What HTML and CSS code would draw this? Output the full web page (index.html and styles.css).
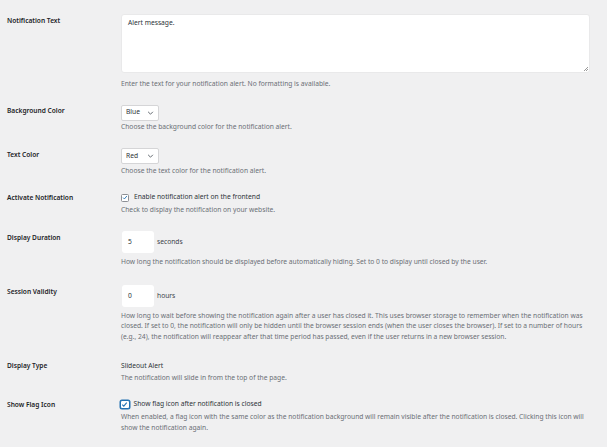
FILE: index.html
```html
<!DOCTYPE html>
<html lang="en">
<head>
<meta charset="utf-8">
<title>Notification Settings</title>
<link rel="stylesheet" href="styles.css">
</head>
<body>
<div class="form">
  <div class="row row-textarea">
    <div class="th">Notification Text</div>
    <div class="td">
      <div class="textarea">Alert message.<span class="grip"></span></div>
      <p class="desc">Enter the text for your notification alert. No formatting is available.</p>
    </div>
  </div>

  <div class="row row-select">
    <div class="th">Background Color</div>
    <div class="td">
      <div class="select">Blue<svg class="chev" viewBox="0 0 8 5" width="7" height="4"><path d="M1 1l3 3 3-3" fill="none" stroke="#50575e" stroke-width="1.1"/></svg></div>
      <p class="desc">Choose the background color for the notification alert.</p>
    </div>
  </div>

  <div class="row row-select">
    <div class="th">Text Color</div>
    <div class="td">
      <div class="select">Red<svg class="chev" viewBox="0 0 8 5" width="7" height="4"><path d="M1 1l3 3 3-3" fill="none" stroke="#50575e" stroke-width="1.1"/></svg></div>
      <p class="desc">Choose the text color for the notification alert.</p>
    </div>
  </div>

  <div class="row row-check">
    <div class="th">Activate Notification</div>
    <div class="td">
      <div class="check-line">
        <span class="checkbox"><svg viewBox="0 0 10 10" width="7" height="7"><path d="M1.8 5.2l2.2 2.2 4.2-5" fill="none" stroke="#2271b1" stroke-width="1.5"/></svg></span>
        <span class="ctl-text">Enable notification alert on the frontend</span>
      </div>
      <p class="desc">Check to display the notification on your website.</p>
    </div>
  </div>

  <div class="row row-number">
    <div class="th">Display Duration</div>
    <div class="td">
      <div class="num-line">
        <span class="number">5</span>
        <span class="unit">seconds</span>
      </div>
      <p class="desc">How long the notification should be displayed before automatically hiding. Set to 0 to display until closed by the user.</p>
    </div>
  </div>

  <div class="row row-number">
    <div class="th">Session Validity</div>
    <div class="td">
      <div class="num-line">
        <span class="number">0</span>
        <span class="unit">hours</span>
      </div>
      <p class="desc">How long to wait before showing the notification again after a user has closed it. This uses browser storage to remember when the notification was closed. If set to 0, the notification will only be hidden until the browser session ends (when the user closes the browser). If set to a number of hours (e.g., 24), the notification will reappear after that time period has passed, even if the user returns in a new browser session.</p>
    </div>
  </div>

  <div class="row row-text">
    <div class="th">Display Type</div>
    <div class="td">
      <div class="ctl-text">Slideout Alert</div>
      <p class="desc">The notification will slide in from the top of the page.</p>
    </div>
  </div>

  <div class="row row-check">
    <div class="th">Show Flag Icon</div>
    <div class="td">
      <div class="check-line">
        <span class="checkbox focused"><svg viewBox="0 0 10 10" width="7" height="7"><path d="M1.8 5.2l2.2 2.2 4.2-5" fill="none" stroke="#2271b1" stroke-width="1.5"/></svg></span>
        <span class="ctl-text">Show flag icon after notification is closed</span>
      </div>
      <p class="desc">When enabled, a flag icon with the same color as the notification background will remain visible after the notification is closed. Clicking this icon will show the notification again.</p>
    </div>
  </div>
</div>
</body>
</html>
```

FILE: styles.css
```css
html, body {
  margin: 0;
  padding: 0;
  background: #f0f0f1;
}
body {
  font-family: "Noto Sans", "Open Sans", sans-serif;
  font-size: 6.7px;
  line-height: 10.65px;
  color: #3c434a;
}
.form {
  display: flex;
  flex-direction: column;
  gap: 15.4px;
  padding: 14px 0 0 7px;
}
.row {
  display: grid;
  grid-template-columns: 114px 469px;
  align-items: start;
}
.th {
  font-weight: 600;
  color: #1d2327;
  font-size: 6.6px;
  line-height: 10.65px;
  padding-top: 1.6px;
}
.row-check .th,
.row-text .th {
  padding-top: 0.5px;
}
.td {
  display: flex;
  flex-direction: column;
  align-items: flex-start;
}
.desc {
  margin: 1.8px 0 0;
  color: #6a6f75;
}
.textarea {
  position: relative;
  box-sizing: border-box;
  width: 469px;
  height: 59.3px;
  background: #fff;
  border: 1px solid #e9e9ea;
  border-radius: 3px;
  padding: 3px 6px;
  color: #2c3338;
}
.grip {
  position: absolute;
  right: 1px;
  bottom: 1px;
  width: 4px;
  height: 4px;
  background: linear-gradient(135deg, transparent 45%, #9a9a9a 46%, #9a9a9a 55%, transparent 56%, transparent 70%, #9a9a9a 71%, #9a9a9a 82%, transparent 83%);
}
.row-textarea .desc {
  margin-top: 5.3px;
}
.select {
  box-sizing: border-box;
  width: 38px;
  height: 16px;
  background: #fff;
  border: 1px solid #d5d5d7;
  border-radius: 2px;
  padding: 0 0 0 4px;
  display: flex;
  align-items: center;
  justify-content: space-between;
  color: #2c3338;
}
.chev {
  margin-right: 4px;
}
.check-line {
  display: flex;
  align-items: center;
  gap: 5px;
  height: 10.65px;
}
.checkbox {
  box-sizing: border-box;
  width: 8px;
  height: 8px;
  border: 1px solid #8c8f94;
  border-radius: 1.5px;
  background: #fff;
  display: flex;
  align-items: center;
  justify-content: center;
}
.checkbox.focused {
  width: 9.5px;
  height: 9.5px;
  margin-left: -1px;
  border: 1px solid #2271b1;
  box-shadow: 0 0 0 0.5px #2271b1;
  border-radius: 2px;
}
.checkbox.focused + .ctl-text {
  margin-left: -1px;
}
.ctl-text {
  color: #2c3338;
}
.row-check .desc {
  margin-top: 2px;
}
.num-line {
  display: flex;
  align-items: center;
  gap: 3px;
  margin-left: 1px;
}
.number {
  box-sizing: border-box;
  width: 32px;
  height: 22px;
  background: #fff;
  border-radius: 3px;
  padding-left: 6px;
  display: flex;
  align-items: center;
  color: #2c3338;
}
.row-number .desc {
  margin-top: 3.5px;
}
.row-number {
  padding-bottom: 2.6px;
}
.row-text .desc {
  margin-top: 2.1px;
}
```
